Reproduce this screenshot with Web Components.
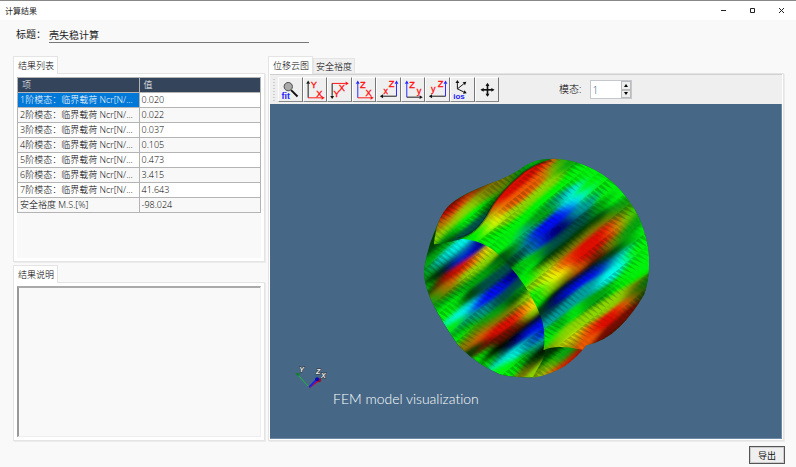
<!DOCTYPE html>
<html lang="zh-CN">
<head>
<meta charset="utf-8">
<title>计算结果</title>
<style>
html,body{margin:0;height:100%}
body{font:300 9px/15px "Open Sans","Noto Sans CJK SC",sans-serif;color:#000;background:#f9f9f9}
</style>
</head>
<body>
<result-window></result-window>
<script>
const define=(name,html,setup)=>customElements.define(name,class extends HTMLElement{
  connectedCallback(){
    if(this.shadowRoot)return;
    const t=document.createElement('template');
    t.innerHTML='<style>*{box-sizing:border-box}button,input,textarea{font:inherit;color:inherit;margin:0;border-radius:0}</style>'+html;
    this.attachShadow({mode:'open'}).append(t.content.cloneNode(true));
    if(setup)setup(this,this.shadowRoot);
  }
});

define('title-bar',`<style>
:host{display:flex;height:20px;flex:none;background:#fff;border-top:1px solid #888;justify-content:space-between;align-items:center;padding-left:5px;font-size:8px;font-weight:400;color:#222}
nav{display:flex}button{border:0;background:none;width:29px;height:18px;padding:0;display:grid;place-items:center}
svg{width:7px;height:7px;fill:none;stroke:#222}
</style><span><slot></slot></span><nav>
<button aria-label="最小化"><svg viewBox="0 0 7 7"><path d="M1 3.5h5"/></svg></button>
<button aria-label="最大化"><svg viewBox="0 0 7 7"><path d="M1.5 1.5h4v4h-4z"/></svg></button>
<button aria-label="关闭"><svg viewBox="0 0 7 7"><path d="M1 1l5 5M6 1l-5 5"/></svg></button></nav>`);

define('title-field',`<style>
:host{display:flex;height:36px;flex:none;padding:6px 16px 0;font-size:10px;font-weight:400;color:#222}
label{width:33px;line-height:17px}
input{width:260px;height:17px;border:0;border-bottom:1px solid #777;background:none;padding:0;outline:0}
</style><label for="t">标题：</label><input id="t" value="壳失稳计算">`);

define('tab-panel',`<style>
:host{display:flex;flex-direction:column;min-width:0;min-height:0}
nav{display:flex;height:17px;flex:none;position:relative;align-items:flex-end}
button{height:15px;padding:0 2px;border:1px solid #e4e4e4;border-bottom:0;background:#f0f0f0;line-height:13px;white-space:nowrap}
button[aria-selected=true]{height:18px;margin-bottom:-1px;padding:0 3px 0 4px;background:#fff;line-height:17px}
main{flex:1;min-height:0;border:1px solid #e4e4e4;box-shadow:1px 1px #ececec;background:#fff;padding:var(--pad,3px);display:flex;flex-direction:column}
</style><nav role="tablist"></nav><main role="tabpanel"><slot></slot></main>`,(el,r)=>{
  el.getAttribute('tabs').split(',').forEach((s,i)=>{
    const b=document.createElement('button');b.role='tab';b.setAttribute('aria-selected',i===0);b.textContent=s;r.querySelector('nav').append(b);
  });
});

define('result-table',`<style>
:host{display:block;flex:1;background:#f9f9f9}
table{width:100%;table-layout:fixed;border-collapse:collapse;background:#fff}
th,td{height:15px;padding:0 2px;border:1px solid #b4b4b4;line-height:14px;text-align:left;font-weight:inherit;overflow:hidden;text-overflow:ellipsis;white-space:nowrap}
th{background:#34445a;color:#fff;padding-left:4px}
tr:nth-child(even) td{background:#f8f8f8}
tr:first-child td:first-child{background:#0078d7;color:#fff}
</style><table><thead><tr><th>项</th><th>值</th></tr></thead><tbody></tbody></table>`,(el,r)=>{
  const v=['0.020','0.022','0.037','0.105','0.473','3.415','41.643'].map((n,i)=>[(i+1)+'阶模态：临界载荷 Ncr[N/...',n]);
  v.push(['安全裕度 M.S.[%]','-98.024']);
  r.querySelector('tbody').innerHTML=v.map(a=>`<tr><td>${a[0]}</td><td>${a[1]}</td></tr>`).join('');
});

define('result-notes',`<style>
:host{display:flex;flex:1}
textarea{flex:1;resize:none;outline:0;background:#f9f9f9;border:1px solid #eee;border-top:2px solid #aaa;border-left:2px solid #999}
</style><textarea aria-label="结果说明" readonly></textarea>`);

const K='#111',R='#f11',B='#22f';
const axis=(x1,y1,x2,y2,c)=>{
  const l=Math.hypot(x2-x1,y2-y1),u=(x2-x1)/l,v=(y2-y1)/l,bx=x2-u*10,by=y2-v*10;
  return `<path d="M${x1} ${y1}L${bx} ${by}" stroke="${c}" stroke-width="3"/><path d="M${x2} ${y2}L${bx-v*6} ${by+u*6}L${bx+v*6} ${by-u*6}Z" fill="${c}"/>`;
};
const glyph=(x,y,s)=>`<text x="${x}" y="${y}" fill="${R}" stroke="${R}" font-size="${s<'a'?29:28}">${s}</text>`;
const ICONS={
 fit:`<path d="M38 38L58 58" stroke="${K}" stroke-width="6"/><circle cx="29" cy="27" r="13" fill="#aaa" stroke="#444" stroke-width="3"/><text x="8" y="65" font-size="28" font-weight="700" fill="${B}">fit</text>`,
 yx:axis(13,62,13,8,K)+axis(13,62,65,62,R)+glyph(21,30,'Y')+glyph(38,58,'X'),
 xy:axis(13,17,65,17,R)+axis(13,17,13,66,K)+glyph(34,42,'X')+glyph(17,61,'Y'),
 zx:axis(15,62,15,8,B)+axis(15,62,65,62,R)+glyph(22,30,'Z')+glyph(39,57,'X'),
 xz:axis(61,57,61,8,B)+axis(61,57,9,57,K)+glyph(37,29,'Z')+glyph(20,49,'x'),
 zy:axis(15,60,15,8,B)+axis(15,60,65,60,K)+glyph(23,30,'Z')+glyph(46,50,'y'),
 yz:axis(61,57,61,8,B)+axis(61,57,9,57,K)+glyph(37,29,'Z')+glyph(16,45,'y'),
 ios:axis(20,34,20,6,K)+axis(20,34,48,12,K)+axis(20,34,49,48,K)+`<text x="7" y="66" font-size="25" font-weight="700" fill="${B}">ios</text>`,
 move:axis(36,37,36,15,K)+axis(36,37,36,59,K)+axis(36,37,14,37,K)+axis(36,37,58,37,K)+`<path d="M18 37H54M36 19V55" stroke="${K}" stroke-width="5"/>`
};
define('view-toolbar',`<style>
:host{display:flex;height:30px;flex:none;background:#efefef;border-top:1px solid #d0d0d0;align-items:center;padding-left:3px;font-size:10px}
i{width:2px;height:22px;margin-right:3px;background:repeating-linear-gradient(#ccc 0 1px,transparent 1px 3px)}
nav{display:flex;width:221px;height:25px;flex:none}
nav button{flex:1;min-width:0;padding:0;border:1px solid #fff;border-right:1px solid #777;border-bottom:1px solid #888;background:#efefef;display:grid;place-items:center}
nav svg{width:23px;height:23px;overflow:visible;font-family:"Liberation Sans",sans-serif;font-weight:400}
label{margin:0 9px 0 60px;white-space:nowrap}
.spin{display:flex;width:42px;height:19px;border:1px solid #c4c8cc;background:#fff}
input{flex:1;min-width:0;border:0;padding:0 1px;outline:0;color:#1c5580;background:none;line-height:16px}
.steps{display:flex;flex-direction:column;width:10px}
.steps button{flex:1;padding:0;border:1px solid #bbb;background:#eee;min-height:0;display:grid;place-items:center}
.steps svg{width:4px;height:3px}
</style><i></i><nav role="toolbar"></nav><label for="m">模态:</label><div class="spin"><input id="m" type="text" inputmode="numeric" value="1"><div class="steps"><button aria-label="增加"><svg viewBox="0 0 4 3"><path d="M0 3L2 0L4 3Z"/></svg></button><button aria-label="减少"><svg viewBox="0 0 4 3"><path d="M0 0L2 3L4 0Z"/></svg></button></div></div>`,(el,r)=>{
  r.querySelector('nav').innerHTML=Object.keys(ICONS).map(k=>`<button aria-label="${k}"><svg viewBox="0 0 72 72">${ICONS[k]}</svg></button>`).join('');
});

/* Colour samples on the deformed shell: x, y, colour. Each region is meshed into facets along the buckling direction. */
const PAL={R:'d41000',D:'701000',O:'e65a00',Y:'ecec00',L:'88cc00',o:'7c7800',G:'00e60c',g:'0a9c12',k:'06420c',K:'000c02',C:'00ece4',c:'009898',t:'00504c',B:'0010e8',n:'000670'};
const SHELL='M424 272Q427 250 434 234Q440 216 448 207Q458 197 475 190L487 185Q506 179 520 170Q530 162 542 160Q556 157 575 162Q596 168 613 182Q630 198 640 218Q650 242 650 262Q650 282 645 295Q634 314 620 328Q606 342 587 346Q578 358 565 367Q550 376 535 378Q515 379 500 375Q480 367 460 348Q440 320 430 298Q424 282 424 272Z';
const REGIONS=[
 {clip:SHELL,pts:`428 262 g,432 250 k,440 250 g,450 254 C,443 263 c,430 275 g,427 288 G,462 255 c,472 251 B,480 246 n,460 260 B,452 265 n,436 277 K,443 270 k,432 290 k,444 280 D,450 276 R,462 267 R,474 262 O,486 253 Y,492 253 L,440 290 o,448 286 O,436 297 g,452 289 o,467 277 L,482 265 L,447 300 g,460 290 g,480 277 g,497 265 g,502 260 k,450 305 G,455 310 G,470 298 k,485 287 t,500 275 t,462 313 C,470 308 C,480 303 B,490 297 B,502 287 B,512 278 n,456 325 G,470 318 c,484 312 c,500 301 t,518 285 t,468 326 g,484 322 g,500 312 g,516 300 k,525 290 g,465 335 G,474 332 o,490 326 o,510 312 o,528 297 L,470 343 o,481 338 O,492 334 R,505 326 R,515 319 R,525 311 O,533 305 Y,539 301 Y,475 350 k,487 346 D,504 338 D,520 327 D,533 315 L,482 357 G,495 352 K,510 343 K,525 329 K,540 318 K,490 363 G,502 356 t,515 343 n,528 332 B,541 322 B,504 360 C,515 354 C,530 343 c,541 335 B,500 370 G,515 367 G,528 357 g,540 345 c,510 377 G,525 372 o,534 362 k,541 352 K,540 371 L`},
 {clip:'M544 342Q548 352 543 361L532 380L560 375Q578 362 588 344L565 344Z',pts:`545 355 k,552 355 K,565 352 g,576 348 g,545 362 k,550 360 G,565 357 g,540 371 o,550 368 L,562 361 g,580 350 D,575 357 R,563 367 R,552 372 O,540 377 L`},
 {clip:'M434 245Q437 218 448 206Q460 196 487 185L525 164L545 158L552 162Q532 166 518 178Q500 193 490 211Q478 234 460 240Q444 244 434 245Z',pts:`440 225 o,444 215 R,450 207 D,462 197 D,480 188 D,447 222 O,455 209 R,466 200 O,480 193 o,439 236 L,450 225 L,462 212 L,475 202 L,490 193 o,505 185 o,450 235 g,462 226 G,475 215 G,490 202 G,505 190 L,514 184 g,522 173 g,535 165 G,545 161 g,450 241 k,461 238 t,472 229 t,480 222 t,491 206 k,502 194 K,515 181 k,530 170 k,540 166 k`},
 {clip:'M458 239Q478 235 490 211Q500 193 518 178Q532 164 560 157L640 170L670 260L650 320L600 355Q560 343 544 351Q548 328 537 307Q525 282 504 260Q486 240 458 239Z',pts:`462 239 g,470 238 G,480 232 G,482 224 L,487 217 o,490 211 O,500 199 R,511 189 R,524 178 R,537 170 R,549 165 O,560 162 g,572 164 g,493 218 Y,506 207 O,518 199 O,530 188 O,543 177 O,555 169 L,565 166 g,495 225 Y,510 216 L,525 207 L,540 193 L,557 178 L,575 170 G,490 235 G,505 235 G,520 222 G,535 207 G,550 195 G,567 183 G,585 174 G,500 246 G,515 239 G,525 233 c,538 220 g,550 208 g,560 200 c,572 194 C,588 185 G,516 249 g,527 243 c,536 236 B,545 229 B,557 220 B,568 211 B,574 204 C,583 198 C,592 193 G,605 185 G,506 257 k,520 256 t,532 250 c,542 243 B,554 234 n,565 224 n,577 213 c,590 202 c,608 192 G,513 264 k,525 263 G,538 255 g,550 249 t,567 235 t,585 219 t,600 208 g,618 198 G,518 272 g,533 266 G,547 260 k,563 249 k,580 234 k,600 219 k,615 210 g,632 211 G,530 280 G,545 268 L,560 257 o,575 245 o,592 231 o,610 218 o,622 211 g,538 281 L,550 274 Y,566 262 O,578 253 R,590 242 R,604 231 R,616 222 O,626 214 o,540 291 G,550 282 Y,565 273 Y,578 262 R,590 252 R,603 242 R,616 230 O,626 222 L,635 219 g,540 302 G,553 289 L,567 278 o,582 269 O,597 257 D,612 244 o,626 235 g,643 232 G,544 310 k,556 295 K,572 283 K,588 270 K,602 263 k,616 253 k,630 242 g,646 245 G,548 315 t,556 303 n,565 293 B,577 283 B,590 274 B,603 268 B,612 263 c,622 257 C,635 250 G,646 258 G,549 321 c,562 310 c,577 299 c,592 288 c,607 279 C,620 268 C,634 262 G,646 270 G,548 334 G,560 325 g,575 314 G,590 303 g,605 293 g,620 284 G,637 276 G,647 283 g,550 343 G,562 337 L,575 328 L,590 318 L,605 309 L,620 298 L,635 288 o,560 343 L,572 341 Y,587 333 O,601 325 R,615 315 R,627 305 O,637 296 o,645 285 k,550 349 o,570 346 o,588 343 O,605 337 D,618 327 D,632 311 D,644 294 k`}
];
const hex=s=>[0,2,4].map(i=>parseInt(s.substr(i,2),16));
const A=-39*Math.PI/180,CA=Math.cos(A),SA=Math.sin(A);
const frame=(x,y)=>[x*CA+y*SA,-x*SA+y*CA];
function mesh(region){
  const P=region.pts.split(',').map(s=>{const a=s.trim().split(' ');return{p:frame(+a[0],+a[1]),c:hex(PAL[a[2]])}});
  const us=P.map(p=>p.p[0]),vs=P.map(p=>p.p[1]);
  const u0=Math.min(...us)-15,u1=Math.max(...us)+15,v0=Math.min(...vs)-12,v1=Math.max(...vs)+12;
  const at=(u,v)=>[(u*CA-v*SA).toFixed(1),(u*SA+v*CA).toFixed(1)].join(' ');
  let base='',teeth='';
  for(let v=v0;v<v1;v+=2)for(let u=u0;u<u1;u+=3){
    let w=0,near=1e9,c=[0,0,0];
    for(const q of P){
      const du=q.p[0]-u-1.5,dv=q.p[1]-v-1,d=du*du/170+dv*dv/13;
      if(d<near)near=d;
      const k=Math.exp(-d)+1e-4/(1+d*d*d);
      w+=k;for(let n=0;n<3;n++)c[n]+=q.c[n]*k;
    }
    if(near>30)continue;
    c=c.map(n=>n/w);
    const hi=Math.max(...c),gain=1+.08*Math.min(1,hi/150);
    const col='rgb('+c.map(n=>Math.max(0,Math.min(255,Math.round((n-5)*gain)))).join()+')';
    base+=`<path fill="${col}" d="M${at(u-.3,v-.3)}L${at(u+3.3,v-.3)}L${at(u+3.3,v+2.3)}L${at(u-.3,v+2.3)}Z"/>`;
  }
  /* shadow facets: thin triangles that taper as they cross a band */
  for(let v=v0,j=0;v<v1;v+=11,j++)for(let u=u0,i=0;u<u1;u+=5,i++){
    const o=.12+.11*Math.sin(u/17+j*2.1);
    teeth+=`<path fill-opacity="${o.toFixed(2)}" d="M${at(u,v)}L${at(u+4,v)}L${at(u+5+j%2*2,v+12)}Z"/>`;
  }
  return `<g filter="url(#soft)">${base}</g><g fill="#001804">${teeth}</g>`;
}
define('model-view',`<style>
:host{display:block;flex:1;min-height:0;background:#466886;border-right:1px solid #6d8ba8;border-bottom:1px solid #6d8ba8}
svg{display:block;width:100%;height:100%}
.cap{font:300 14px Lato,sans-serif;fill:#fff;font-variant-ligatures:none}.ax{font:italic 700 7px "Liberation Sans",sans-serif;fill:#eee;stroke:#333;stroke-width:1;paint-order:stroke}
</style><svg viewBox="270 104 512 335" role="img" aria-label="FEM model"></svg>`,(el,r)=>{
  r.querySelector('svg').innerHTML=`<defs><filter id="soft" x="0" y="0" width="1" height="1"><feGaussianBlur stdDeviation="1"/></filter><clipPath id="shell"><path d="${SHELL}"/></clipPath>${REGIONS.map((g,i)=>`<clipPath id="c${i}"><path d="${g.clip}"/></clipPath>`).join('')}</defs>
  <g clip-path="url(#shell)"><rect x="420" y="150" width="235" height="235" fill="#0a6a14"/>${REGIONS.map((g,i)=>`<g clip-path="url(#c${i})">${mesh(g)}</g>`).join('')}
  <g fill="none" stroke="#021408" stroke-opacity=".35"><path d="M458 239Q478 235 490 211Q500 193 518 178Q532 164 552 161" stroke-width="2"/></g></g>
  <g stroke-width="1"><path d="M309 388L297 375" stroke="#18c030"/><path d="M295 374l5 0-2 3z" fill="#0a8020"/><path d="M309 388L319 381" stroke="#c01030" stroke-width="2"/><circle cx="319" cy="381" r="2" fill="#a01020"/><path d="M309 388L317 380" stroke="#2020e0" stroke-width="2"/><circle cx="317" cy="380" r="2" fill="#0808c0"/></g>
  <text class="ax" x="299" y="373">Y</text><text class="ax" x="316" y="375">Z</text><text class="ax" x="321" y="379">X</text>
  <text class="cap" x="333" y="405">FEM model visualization</text>`;
});

define('result-window',`<style>
:host{display:flex;flex-direction:column;height:100vh;background:#f9f9f9}
.work{flex:1;min-height:0;display:grid;grid-template-columns:252fr 516fr;gap:3px;padding:0 12px 0 13px}
.left{display:grid;grid-template-rows:205fr 176fr;gap:3px;min-height:0;min-width:0}
.right{--pad:0 1px 1px}
footer{display:flex;justify-content:flex-end;height:26px;flex:none;padding:5px 11px 3px}
footer button{width:36px;border:1px solid #555;background:#efefef;padding:0;font-weight:400;color:#111;line-height:15px;box-shadow:inset 0 0 0 1px #ccc}
</style><title-bar>计算结果</title-bar><title-field></title-field>
<div class="work"><div class="left"><tab-panel tabs="结果列表"><result-table></result-table></tab-panel><tab-panel tabs="结果说明"><result-notes></result-notes></tab-panel></div>
<tab-panel class="right" tabs="位移云图,安全裕度"><view-toolbar></view-toolbar><model-view></model-view></tab-panel></div>
<footer><button>导出</button></footer>`);
</script>
</body>
</html>
